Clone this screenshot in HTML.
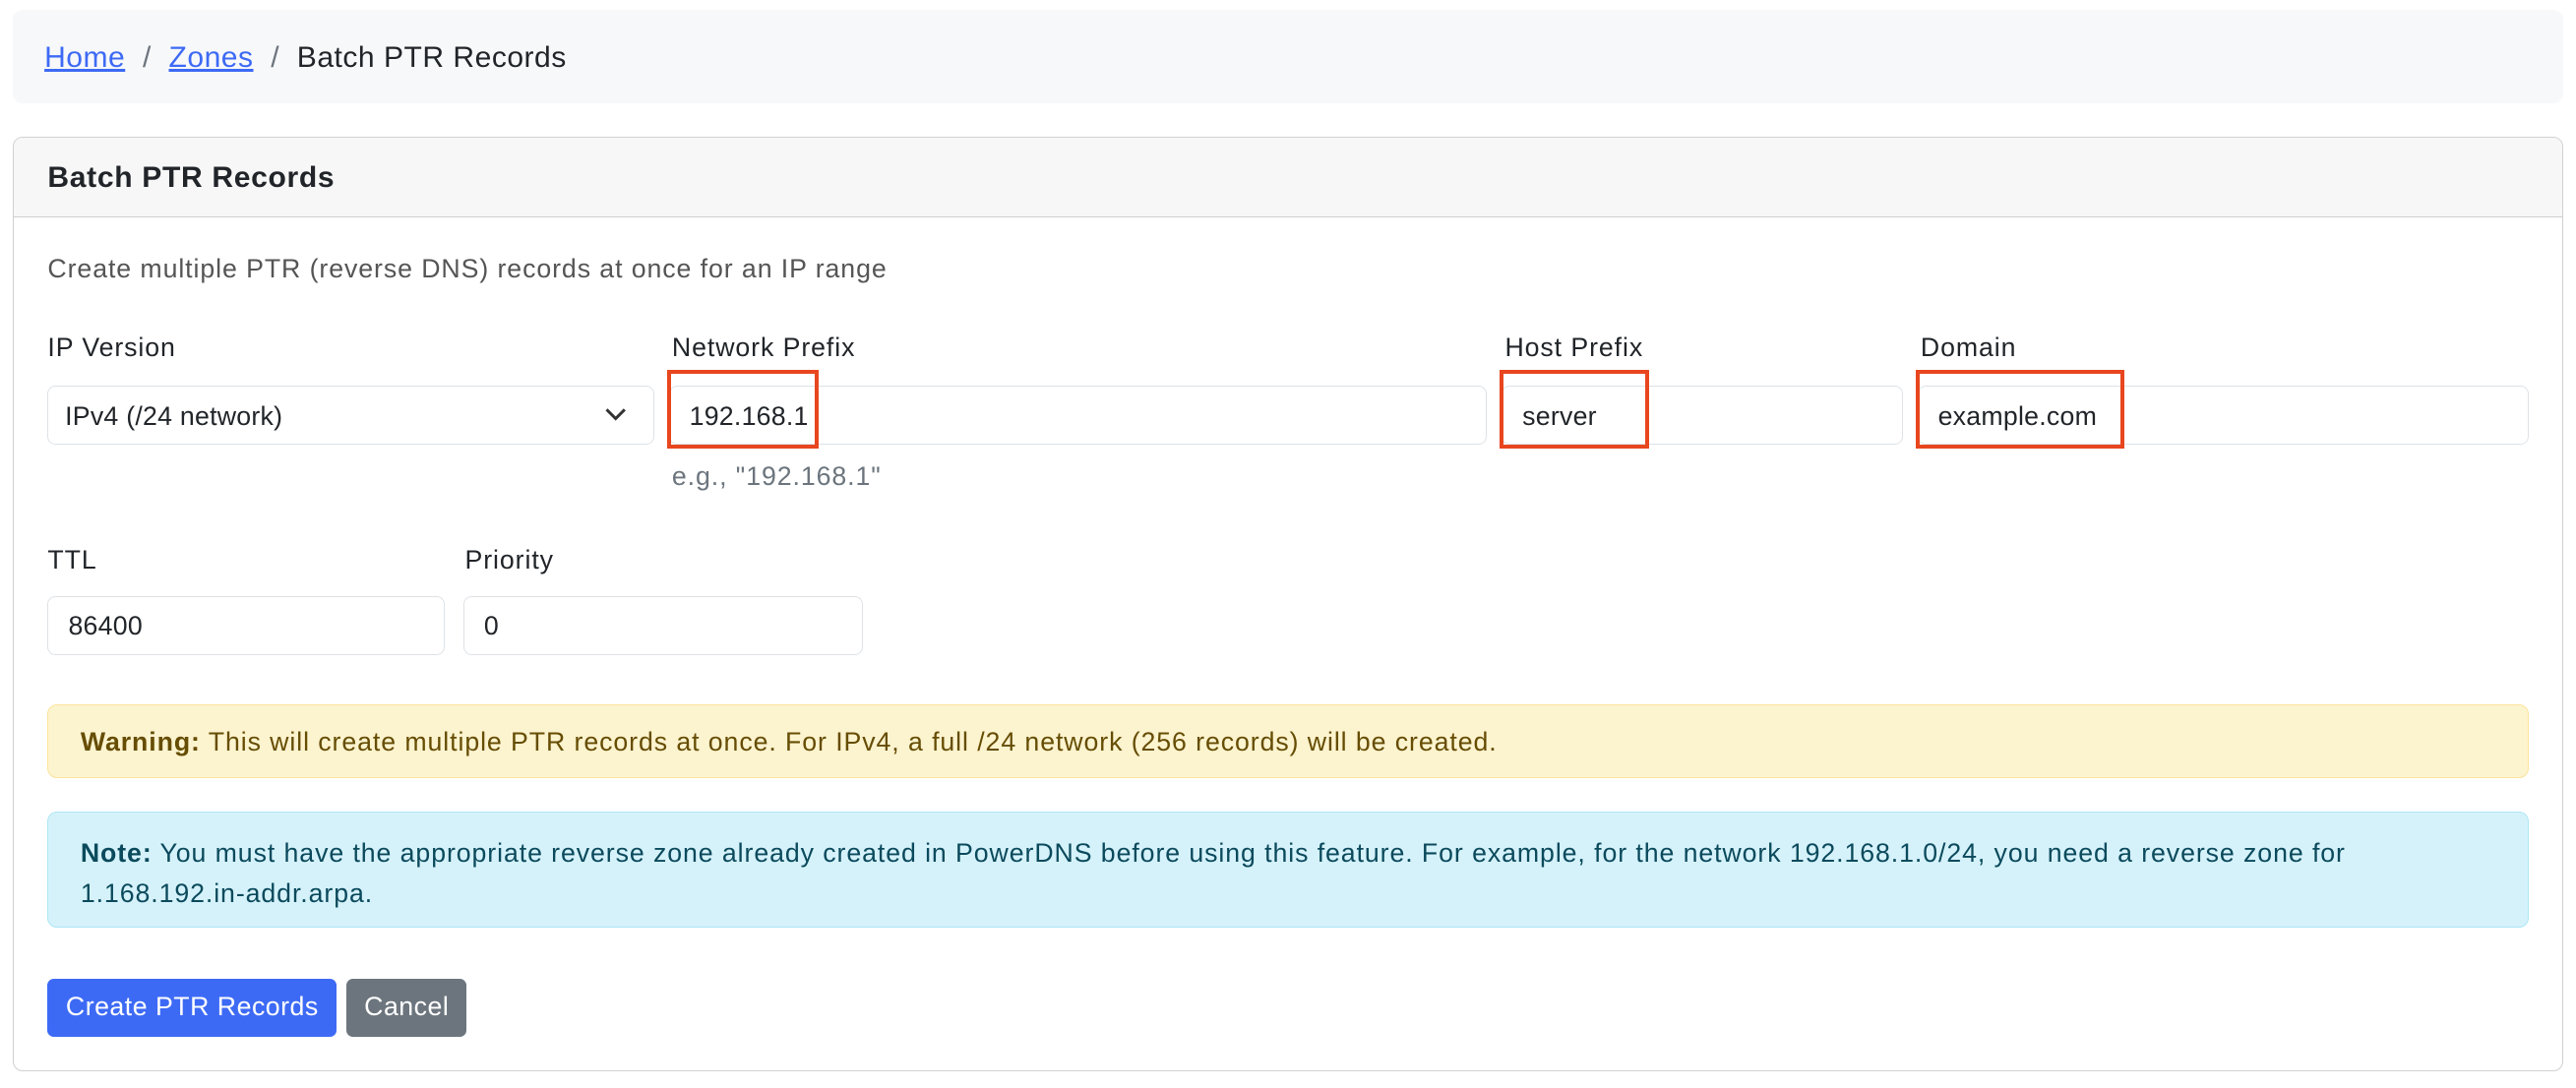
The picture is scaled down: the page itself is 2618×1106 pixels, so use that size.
<!DOCTYPE html>
<html><head><meta charset="utf-8"><style>
html,body{margin:0;padding:0;background:#fff;width:2618px;height:1106px;overflow:hidden}
#w{zoom:1.6697;width:1568px;height:662px;position:relative;font-family:"Liberation Sans",sans-serif;font-size:16px;color:#212529;letter-spacing:0.55px}
.a{position:absolute}
.t{position:absolute;white-space:nowrap;line-height:20px}
.inp{position:absolute;box-sizing:border-box;border:1px solid #dee2e6;border-radius:5px;background:#fff;height:36px;top:235px}
.inp span{position:absolute;left:12px;top:8px;line-height:20px;letter-spacing:0.15px}
.red{position:absolute;border:2.5px solid #e8461f;box-sizing:border-box;top:225px;height:48px}
</style></head><body><div id="w">
<div class="a" style="left:8px;top:6px;width:1552px;height:57px;background:#f7f8fa;border-radius:6px"></div>
<div class="t" style="left:27px;top:25px;font-size:18px;letter-spacing:0.3px"><span style="color:#3d6af5;text-decoration:underline">Home</span> <span style="color:#6c757d">&nbsp;/&nbsp;</span> <span style="color:#3d6af5;text-decoration:underline">Zones</span> <span style="color:#6c757d">&nbsp;/&nbsp;</span> Batch PTR Records</div>
<div class="a" style="left:8px;top:83px;width:1552px;height:569px;box-sizing:border-box;border:1px solid #d0d0d0;border-radius:6px;overflow:hidden">
<div class="a" style="left:0;top:0;right:0;height:48px;background:#f7f7f7;border-bottom:1px solid #d0d0d0"></div>
</div>
<div class="t" style="left:29px;top:98px;font-size:18px;font-weight:bold;letter-spacing:0.4px">Batch PTR Records</div>
<div class="t" style="left:29px;top:154px;color:#555">Create multiple PTR (reverse DNS) records at once for an IP range</div>
<div class="t" style="left:29px;top:202px">IP Version</div>
<div class="t" style="left:409px;top:202px">Network Prefix</div>
<div class="t" style="left:916px;top:202px">Host Prefix</div>
<div class="t" style="left:1169px;top:202px">Domain</div>
<div class="inp" style="left:29px;width:369px"><span style="left:10px">IPv4 (/24 network)</span>
<svg class="a" style="left:338px;top:12px" width="14" height="10" viewBox="0 0 14 10"><path d="M1.5 2l5.5 5.5 5.5-5.5" fill="none" stroke="#333" stroke-width="1.8"/></svg></div>
<div class="inp" style="left:407px;width:498px"><span>192.168.1</span></div>
<div class="inp" style="left:914px;width:244px"><span>server</span></div>
<div class="inp" style="left:1167px;width:372px"><span>example.com</span></div>
<div class="red" style="left:406px;width:92px"></div>
<div class="red" style="left:913px;width:91px"></div>
<div class="red" style="left:1166px;width:127px"></div>
<div class="t" style="left:409px;top:280px;color:#6c757d">e.g., "192.168.1"</div>
<div class="t" style="left:29px;top:331px">TTL</div>
<div class="t" style="left:283px;top:331px">Priority</div>
<div class="inp" style="left:29px;width:242px;top:363px"><span>86400</span></div>
<div class="inp" style="left:282px;width:243px;top:363px"><span>0</span></div>
<div class="a" style="left:29px;top:429px;width:1510px;height:45px;box-sizing:border-box;background:#fcf3cf;border:1px solid #fbe49a;border-radius:6px"></div>
<div class="t" style="left:49px;top:442px;color:#664d03"><b>Warning:</b> This will create multiple PTR records at once. For IPv4, a full /24 network (256 records) will be created.</div>
<div class="a" style="left:29px;top:494px;width:1510px;height:71px;box-sizing:border-box;background:#d5f2fb;border:1px solid #aee6f5;border-radius:6px"></div>
<div class="t" style="left:49px;top:507px;color:#0b4a5c;line-height:25px"><b>Note:</b> You must have the appropriate reverse zone already created in PowerDNS before using this feature. For example, for the network 192.168.1.0/24, you need a reverse zone for<br>1.168.192.in-addr.arpa.</div>
<div class="a" style="left:29px;top:596px;width:176px;height:35px;background:#3d6af5;border-radius:4px"></div>
<div class="t" style="left:29px;top:603px;width:176px;text-align:center;color:#fff;letter-spacing:0.3px">Create PTR Records</div>
<div class="a" style="left:211px;top:596px;width:73px;height:35px;background:#6c757d;border-radius:4px"></div>
<div class="t" style="left:211px;top:603px;width:73px;text-align:center;color:#fff;letter-spacing:0.3px">Cancel</div>
</div></body></html>
